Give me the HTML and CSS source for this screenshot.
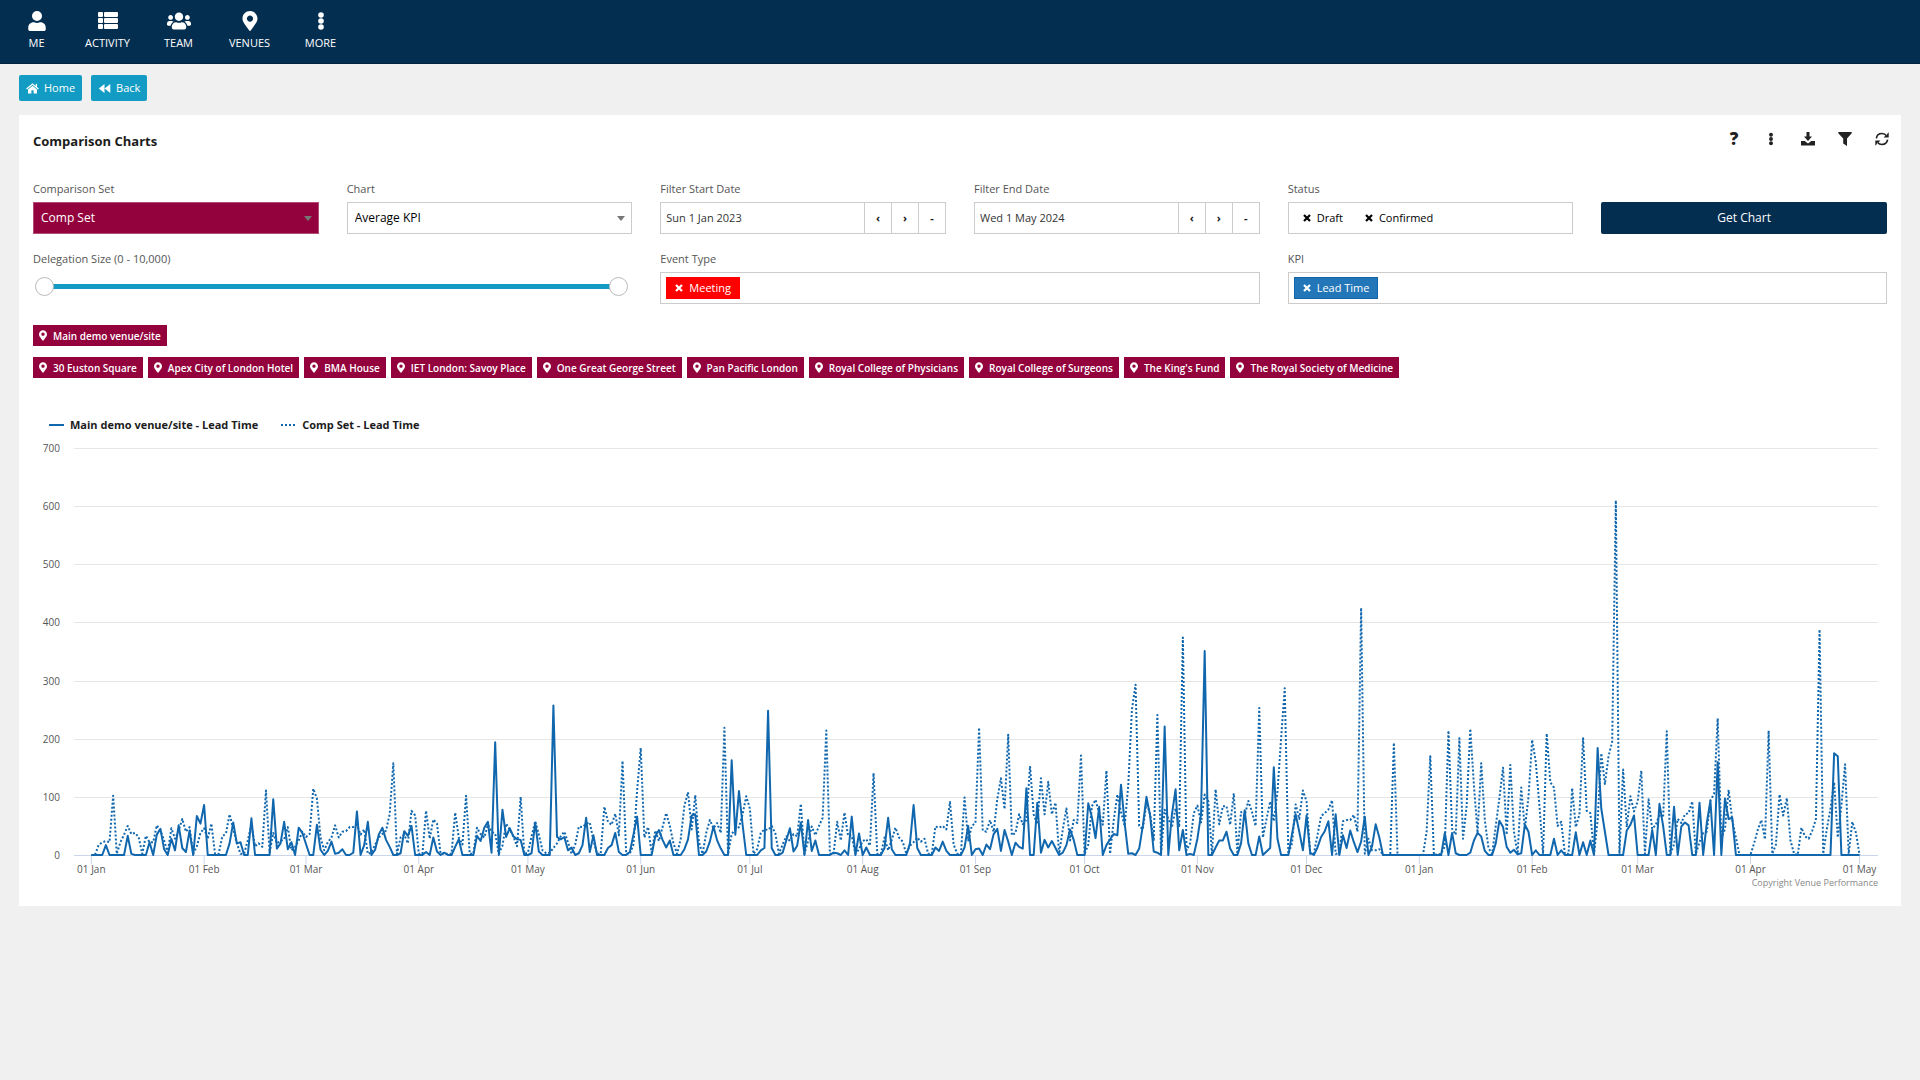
FILE: index.html
```html
<!DOCTYPE html>
<html lang="en">
<head>
  <meta charset="UTF-8">
  <meta name="viewport" content="width=device-width, initial-scale=1.0">
  <title>Comparison Charts</title>
  <link rel="stylesheet" href="styles.css">
</head>
<body>
  <!-- shared icons -->
  <svg class="sprite" aria-hidden="true">
    <symbol id="pin" viewBox="0 0 384 512"><path d="M172.268 501.67C26.97 291.031 0 269.413 0 192 0 85.961 85.961 0 192 0s192 85.961 192 192c0 77.413-26.97 99.031-172.268 309.67-9.535 13.774-29.93 13.773-39.464 0zM192 272c44.183 0 80-35.817 80-80s-35.817-80-80-80-80 35.817-80 80 35.817 80 80 80z"/></symbol>
    <symbol id="dots" viewBox="0 -1 6 20"><circle cx="3" cy="3" r="2.8"/><circle cx="3" cy="9" r="2.8"/><circle cx="3" cy="15" r="2.8"/></symbol>
    <symbol id="cross" viewBox="0 0 8 8"><path d="M1 1l6 6M7 1l-6 6" stroke="currentColor" stroke-width="2.2"/></symbol>
  </svg>

  <nav class="navbar">
    <a href="#" class="nav-item">
      <svg class="nav-icon" viewBox="0 0 448 512"><path d="M224 256A128 128 0 1 0 224 0a128 128 0 0 0 0 256zm89.600 32h-16.700c-22.200 10.200-46.900 16-72.900 16s-50.600-5.800-72.900-16h-16.700C60.200 288 0 348.200 0 422.400V464c0 26.500 21.500 48 48 48h352c26.500 0 48-21.500 48-48v-41.600c0-74.200-60.200-134.400-134.400-134.400z"/></svg>
      <span>ME</span>
    </a>
    <a href="#" class="nav-item">
      <svg class="nav-icon" viewBox="0 -1 20 20"><rect x="0" y="0" width="5" height="5" rx="1"/><rect x="0" y="6" width="5" height="5" rx="1"/><rect x="0" y="12" width="5" height="5" rx="1"/><rect x="6" y="0" width="14" height="5" rx="1"/><rect x="6" y="6" width="14" height="5" rx="1"/><rect x="6" y="12" width="14" height="5" rx="1"/></svg>
      <span>ACTIVITY</span>
    </a>
    <a href="#" class="nav-item">
      <svg class="nav-icon" viewBox="0 0 640 512"><path d="M96 224c35.300 0 64-28.700 64-64s-28.700-64-64-64-64 28.700-64 64 28.700 64 64 64zm448 0c35.300 0 64-28.700 64-64s-28.700-64-64-64-64 28.700-64 64 28.700 64 64 64zm32 32h-64c-17.600 0-33.500 7.100-45.100 18.600 40.300 22.100 68.900 62 75.100 109.400h66c17.700 0 32-14.300 32-32v-32c0-35.300-28.700-64-64-64zm-256 0c61.900 0 112-50.100 112-112S381.900 32 320 32 208 82.100 208 144s50.100 112 112 112zm76.800 32h-8.300c-20.800 10-43.900 16-68.500 16s-47.600-6-68.500-16h-8.300C179.600 288 128 339.600 128 403.200V432c0 26.500 21.500 48 48 48h288c26.500 0 48-21.500 48-48v-28.800c0-63.600-51.600-115.200-115.200-115.200zm-223.700-13.400C161.500 263.100 145.600 256 128 256H64c-35.300 0-64 28.700-64 64v32c0 17.700 14.300 32 32 32h65.900c6.300-47.400 34.900-87.300 75.200-109.400z"/></svg>
      <span>TEAM</span>
    </a>
    <a href="#" class="nav-item">
      <svg class="nav-icon"><use href="#pin"/></svg>
      <span>VENUES</span>
    </a>
    <a href="#" class="nav-item">
      <svg class="nav-icon"><use href="#dots"/></svg>
      <span>MORE</span>
    </a>
  </nav>

  <main class="page">
    <div class="toolbar">
      <a href="#" class="btn-small">
        <svg viewBox="0 0 13 11"><path d="M6.500 2.700L2 6.400V10.400h3.400V7.300h2.200v3.100H11V6.400z"/><path d="M.6 6L6.500 1.100 12.400 6M10.400.8v3" fill="none" stroke="currentColor" stroke-width="1.300"/></svg>
        Home
      </a>
      <a href="#" class="btn-small">
        <svg viewBox="0 0 13 11"><path d="M6.500 1v9L.8 5.500zM12.300 1v9L6.600 5.500z"/></svg>
        Back
      </a>
    </div>

    <section class="card">
      <header class="card-header">
        <h1>Comparison Charts</h1>
        <div class="card-tools">
          <button type="button" class="tool help" aria-label="Help">?</button>
          <button type="button" class="tool" aria-label="More"><svg><use href="#dots"/></svg></button>
          <button type="button" class="tool" aria-label="Download"><svg viewBox="0 0 14 14"><path d="M5.500 0h3v4.500H11L7 9 3 4.500h2.500z"/><path d="M0 9h3.700L7 11.600 10.300 9H14v4.500H0z"/></svg></button>
          <button type="button" class="tool" aria-label="Filter"><svg viewBox="0 0 14 14"><path d="M.3 0h13.400v1.200L9 6.500V14L5.200 11.500v-5L.3 1.200z"/></svg></button>
          <button type="button" class="tool" aria-label="Refresh"><svg viewBox="0 0 14 14"><path d="M1.400 6.300C1.800 3.500 4.200 1.500 7 1.500c1.900 0 3.500.9 4.600 2.300M12.600 7.700c-.4 2.800-2.800 4.800-5.600 4.800-1.900 0-3.500-.9-4.600-2.300" fill="none" stroke="currentColor" stroke-width="1.600"/><path d="M13.700.3v5.100H8.600l1.700-1.700 1.400 0 .6-2zM.3 13.700V8.600h5.100l-1.700 1.700-1.400 0-.6 2z"/></svg></button>
        </div>
      </header>

      <form class="filters">
        <div class="field">
          <label for="comp-set">Comparison Set</label>
          <div class="select select-dark">
            <select id="comp-set"><option>Comp Set</option></select>
          </div>
        </div>
        <div class="field">
          <label for="chart-type">Chart</label>
          <div class="select">
            <select id="chart-type"><option>Average KPI</option></select>
          </div>
        </div>
        <div class="field">
          <label for="start-date">Filter Start Date</label>
          <div class="control">
            <input type="text" id="start-date" value="Sun 1 Jan 2023">
            <button type="button" aria-label="Previous day">‹</button>
            <button type="button" aria-label="Next day">›</button>
            <button type="button" aria-label="Clear date">-</button>
          </div>
        </div>
        <div class="field">
          <label for="end-date">Filter End Date</label>
          <div class="control">
            <input type="text" id="end-date" value="Wed 1 May 2024">
            <button type="button" aria-label="Previous day">‹</button>
            <button type="button" aria-label="Next day">›</button>
            <button type="button" aria-label="Clear date">-</button>
          </div>
        </div>
        <div class="field">
          <label for="status">Status</label>
          <div class="control chips">
            <button type="button" class="chip"><svg><use href="#cross"/></svg>Draft</button>
            <button type="button" class="chip"><svg><use href="#cross"/></svg>Confirmed</button>
            <input type="text" id="status">
          </div>
        </div>
        <button type="button" class="btn-primary">Get Chart</button>

        <div class="field wide">
          <label for="size-min">Delegation Size (0 - 10,000)</label>
          <div class="slider">
            <input type="range" id="size-min" min="0" max="10000" value="0">
            <input type="range" id="size-max" min="0" max="10000" value="10000" aria-label="Maximum delegation size">
          </div>
        </div>
        <div class="field wide">
          <label for="event-type">Event Type</label>
          <div class="control chips">
            <button type="button" class="chip chip-red"><svg><use href="#cross"/></svg>Meeting</button>
            <input type="text" id="event-type">
          </div>
        </div>
        <div class="field wide">
          <label for="kpi">KPI</label>
          <div class="control chips">
            <button type="button" class="chip chip-blue"><svg><use href="#cross"/></svg>Lead Time</button>
            <input type="text" id="kpi">
          </div>
        </div>
      </form>

      <ul class="tags">
        <li><svg><use href="#pin"/></svg>Main demo venue/site</li>
      </ul>
      <ul class="tags">
        <li><svg><use href="#pin"/></svg>30 Euston Square</li>
        <li><svg><use href="#pin"/></svg>Apex City of London Hotel</li>
        <li><svg><use href="#pin"/></svg>BMA House</li>
        <li><svg><use href="#pin"/></svg>IET London: Savoy Place</li>
        <li><svg><use href="#pin"/></svg>One Great George Street</li>
        <li><svg><use href="#pin"/></svg>Pan Pacific London</li>
        <li><svg><use href="#pin"/></svg>Royal College of Physicians</li>
        <li><svg><use href="#pin"/></svg>Royal College of Surgeons</li>
        <li><svg><use href="#pin"/></svg>The King's Fund</li>
        <li><svg><use href="#pin"/></svg>The Royal Society of Medicine</li>
      </ul>

      <div class="chart">
        <div class="legend">
          <span><svg><line class="series" x1="0" y1="4" x2="15" y2="4"/></svg>Main demo venue/site - Lead Time</span>
          <span><svg><line class="series dotted" x1="0" y1="4" x2="15" y2="4"/></svg>Comp Set - Lead Time</span>
        </div>

        <svg class="plot" role="img" aria-label="Lead time by day, January 2023 to May 2024">
          <g class="grid">
            <line x1="0" x2="100%" y1="0" y2="0"/>
            <line x1="0" x2="100%" y1="58" y2="58"/>
            <line x1="0" x2="100%" y1="116" y2="116"/>
            <line x1="0" x2="100%" y1="174" y2="174"/>
            <line x1="0" x2="100%" y1="233" y2="233"/>
            <line x1="0" x2="100%" y1="291" y2="291"/>
            <line x1="0" x2="100%" y1="349" y2="349"/>
            <line class="axis" x1="0" x2="100%" y1="407" y2="407"/>
          </g>
          <g class="y-labels">
            <text x="-14" y="4">700</text>
            <text x="-14" y="62">600</text>
            <text x="-14" y="120">500</text>
            <text x="-14" y="178">400</text>
            <text x="-14" y="237">300</text>
            <text x="-14" y="295">200</text>
            <text x="-14" y="353">100</text>
            <text x="-14" y="411">0</text>
          </g>

          <!-- month ticks, placed by day number out of 486 -->
          <svg class="x-axis" x="0.96%" width="98.02%">
            <line x1="0" x2="0" y1="407" y2="416"/><text x="0" y="425">01 Jan</text>
            <line x1="6.38%" x2="6.38%" y1="407" y2="416"/><text x="6.38%" y="425">01 Feb</text>
            <line x1="12.14%" x2="12.14%" y1="407" y2="416"/><text x="12.14%" y="425">01 Mar</text>
            <line x1="18.52%" x2="18.52%" y1="407" y2="416"/><text x="18.52%" y="425">01 Apr</text>
            <line x1="24.69%" x2="24.69%" y1="407" y2="416"/><text x="24.69%" y="425">01 May</text>
            <line x1="31.07%" x2="31.07%" y1="407" y2="416"/><text x="31.07%" y="425">01 Jun</text>
            <line x1="37.24%" x2="37.24%" y1="407" y2="416"/><text x="37.24%" y="425">01 Jul</text>
            <line x1="43.62%" x2="43.62%" y1="407" y2="416"/><text x="43.62%" y="425">01 Aug</text>
            <line x1="50%" x2="50%" y1="407" y2="416"/><text x="50%" y="425">01 Sep</text>
            <line x1="56.17%" x2="56.17%" y1="407" y2="416"/><text x="56.17%" y="425">01 Oct</text>
            <line x1="62.55%" x2="62.55%" y1="407" y2="416"/><text x="62.55%" y="425">01 Nov</text>
            <line x1="68.72%" x2="68.72%" y1="407" y2="416"/><text x="68.72%" y="425">01 Dec</text>
            <line x1="75.10%" x2="75.10%" y1="407" y2="416"/><text x="75.10%" y="425">01 Jan</text>
            <line x1="81.48%" x2="81.48%" y1="407" y2="416"/><text x="81.48%" y="425">01 Feb</text>
            <line x1="87.45%" x2="87.45%" y1="407" y2="416"/><text x="87.45%" y="425">01 Mar</text>
            <line x1="93.83%" x2="93.83%" y1="407" y2="416"/><text x="93.83%" y="425">01 Apr</text>
            <line x1="100%" x2="100%" y1="407" y2="416"/><text x="100%" y="425">01 May</text>
          </svg>

          <!-- points are day,value -->
          <svg class="lines" x="0.96%" width="98.02%" height="407" viewBox="0 -700 486 700" preserveAspectRatio="none">
            <g transform="scale(1,-1)">
              <polyline class="series dotted" points="0,0 1,0 2,17 3,22 4,24 5,22 6,102 7,2 8,22 9,35 10,50 11,36 12,38 13,31 14,2 15,33 16,22 17,22 18,51 19,42 20,25 21,4 22,46 23,28 24,42 25,62 26,40 27,48 28,2 29,15 30,38 31,46 32,28 33,54 34,2 35,2 36,32 37,37 38,70 39,45 40,20 41,2 42,2 43,25 44,52 45,15 46,20 47,14 48,111 49,4 50,38 51,20 52,24 53,27 54,48 55,8 56,14 57,25 58,40 59,31 60,36 61,114 62,97 63,30 64,8 65,22 66,30 67,51 68,30 69,40 70,41 71,48 72,48 73,52 74,35 75,44 76,2 77,4 78,18 79,30 80,36 81,42 82,70 83,158 84,2 85,30 86,35 87,20 88,76 89,68 90,2 91,2 92,76 93,28 94,61 95,54 96,2 99,2 100,73 101,30 102,18 103,102 104,2 105,2 106,47 107,36 108,30 109,52 110,40 111,37 112,2 113,16 114,54 115,44 116,32 117,15 118,100 119,2 120,4 121,32 122,58 123,35 124,8 125,3 126,4 127,12 128,20 129,32 130,40 131,22 132,2 133,18 134,49 135,48 136,54 137,56 138,25 139,2 140,2 141,83 142,57 143,52 144,71 145,34 146,162 147,2 148,2 149,18 150,110 151,184 152,30 153,48 154,4 155,42 156,24 157,48 158,72 159,50 160,20 161,2 162,28 163,85 164,108 165,44 166,103 167,22 168,2 169,38 170,60 171,46 172,55 173,38 174,219 175,2 176,36 177,44 178,48 179,70 180,101 181,80 182,2 183,10 184,38 185,44 186,43 187,50 188,37 189,2 190,18 191,32 192,24 193,36 194,32 195,88 196,2 197,24 198,49 199,34 200,50 201,64 202,214 203,2 204,2 205,57 206,25 207,73 208,33 209,33 210,2 211,10 212,24 213,27 214,16 215,141 216,2 217,2 218,30 219,8 220,26 221,47 222,30 223,23 224,2 225,16 226,22 227,30 228,23 229,28 230,2 231,2 232,49 233,47 234,50 235,44 236,91 237,18 238,2 239,2 240,99 241,25 242,50 243,55 244,219 245,42 246,40 247,60 248,40 249,96 250,132 251,79 252,207 253,34 254,38 255,70 256,53 257,60 258,153 259,70 260,53 261,132 262,70 263,126 264,70 265,90 266,2 267,44 268,80 269,25 270,60 271,55 272,171 273,2 274,18 275,84 276,95 277,72 278,52 279,145 280,2 281,60 282,104 283,74 284,50 285,120 286,250 287,293 288,50 289,44 290,90 291,70 292,26 293,241 294,2 295,78 296,62 297,48 298,80 299,50 300,374 301,8 302,20 303,72 304,85 305,56 306,104 307,92 308,2 309,113 310,53 311,84 312,84 313,52 314,106 315,2 316,74 317,68 318,93 319,74 320,50 321,253 322,30 323,62 324,92 325,58 326,108 327,200 328,287 329,2 330,20 331,87 332,62 333,111 334,92 335,2 336,2 337,34 338,67 339,72 340,78 341,94 342,2 343,2 344,58 345,60 346,60 347,69 348,40 349,425 350,2 351,28 352,8 353,8 354,10 355,0 357,0 358,193 359,0 366,0 367,40 368,170 369,0 371,2 372,15 373,214 374,45 375,35 376,201 377,28 378,85 379,217 380,120 381,38 382,158 383,60 384,12 385,2 386,50 387,98 388,150 389,35 390,155 391,40 392,2 393,116 394,45 395,100 396,198 397,160 398,85 399,2 400,209 401,125 402,116 403,50 404,57 405,2 406,2 407,115 408,48 409,70 410,201 411,76 412,72 413,2 414,60 415,175 416,122 417,170 418,195 419,610 420,2 421,147 422,48 423,101 424,75 425,92 426,145 427,2 428,96 429,45 430,52 431,70 432,65 433,213 434,2 435,18 436,62 437,55 438,70 439,72 440,92 441,2 442,22 443,38 444,40 445,94 446,105 447,235 448,28 449,45 450,112 451,60 452,30 453,0 456,0 457,20 458,43 459,60 460,27 461,214 462,2 463,18 464,104 465,68 466,98 467,25 468,2 469,0 470,47 471,32 472,28 473,42 474,62 475,388 476,2 477,45 478,80 479,125 480,30 481,85 482,156 483,2 484,57 485,38 486,0"/>
              <polyline class="series" points="0,0 3,0 4,17 5,0 9,0 10,33 11,2 12,0 15,0 16,22 17,0 18,35 19,45 20,10 21,0 22,28 23,8 24,51 25,12 26,5 27,42 28,0 29,67 30,54 31,86 32,0 37,0 38,20 39,56 40,20 41,22 42,0 43,0 44,63 45,0 49,0 50,96 51,11 52,20 53,57 54,10 55,22 56,0 57,47 58,38 59,19 60,0 61,0 62,52 63,9 64,0 65,7 66,23 67,2 68,4 69,10 70,0 71,0 72,4 73,75 74,0 75,17 76,57 77,0 78,9 79,35 80,47 81,26 82,14 83,0 84,0 85,3 86,41 87,33 88,50 89,0 91,0 92,5 93,0 94,30 95,6 96,0 97,4 98,0 99,0 100,14 101,27 102,0 105,0 106,33 107,24 108,47 109,57 110,4 111,194 112,0 113,78 114,31 115,46 116,32 117,27 118,26 119,0 120,0 121,3 122,56 123,6 124,0 126,0 127,257 128,31 129,27 130,31 131,8 132,13 133,0 134,3 135,17 136,64 137,5 138,34 139,0 141,0 142,12 143,17 144,38 145,5 146,0 147,0 148,5 149,35 150,66 151,0 154,0 155,32 156,43 157,26 158,13 159,25 160,0 162,0 163,10 164,27 165,68 166,70 167,0 168,0 169,6 170,23 171,49 172,25 173,11 174,0 175,0 176,163 177,35 178,110 179,52 180,0 183,0 184,8 185,12 186,248 187,12 188,0 189,0 190,4 191,25 192,46 193,6 194,16 195,56 196,0 197,60 198,7 199,25 200,0 203,0 204,4 205,3 206,0 207,8 208,0 209,66 210,0 211,37 212,0 213,13 214,0 217,0 218,12 219,64 220,10 221,0 224,0 225,20 226,86 227,12 228,0 231,0 232,13 233,7 234,23 235,7 236,0 239,0 240,13 241,50 242,0 243,10 244,11 245,0 246,18 247,10 248,36 249,45 250,7 251,43 252,23 253,0 254,21 255,14 256,11 257,115 258,0 259,0 260,90 261,4 262,26 263,13 264,24 265,12 266,0 267,4 268,17 269,44 270,26 271,0 273,0 274,89 275,65 276,29 277,83 278,0 279,17 280,27 281,36 282,34 283,121 284,55 285,2 286,3 287,0 288,11 289,50 290,100 291,68 292,6 293,4 294,0 295,221 296,0 297,70 298,113 299,8 300,43 301,0 302,2 303,0 304,28 305,70 306,351 307,0 308,0 309,13 310,25 311,25 312,40 313,11 314,0 315,0 316,20 317,77 318,20 319,0 320,0 321,32 322,0 323,6 324,12 325,151 326,28 327,0 329,0 330,36 331,70 332,40 333,8 334,68 335,4 336,0 337,13 338,31 339,41 340,58 341,0 342,70 343,0 344,34 345,12 346,42 347,22 348,5 349,23 350,66 351,0 352,15 353,53 354,30 355,0 371,0 372,38 373,0 374,38 375,3 376,0 378,0 379,4 380,25 381,38 382,32 383,7 384,0 385,0 386,20 387,59 388,48 389,14 390,4 391,9 392,1 393,3 394,52 395,40 396,0 397,8 398,0 401,0 402,28 403,0 404,8 405,0 407,0 408,39 409,0 410,22 411,0 412,25 413,0 414,184 415,80 416,40 417,0 421,0 422,42 423,52 424,68 425,0 428,0 429,43 430,0 431,88 432,50 433,0 434,0 435,83 436,0 437,49 438,56 439,51 440,0 441,0 442,90 443,0 444,55 445,93 446,0 447,160 448,0 449,97 450,62 451,64 452,0 478,0 479,175 480,170 481,0 486,0"/>
            </g>
          </svg>
        </svg>
        <p class="credits">Copyright Venue Performance</p>
      </div>
    </section>
  </main>
</body>
</html>
```
FILE: styles.css
```css
* {
  box-sizing: border-box;
}
body {
  margin: 0;
  background-color: #f0f0f0;
  font-family: "Open Sans", "Noto Sans", sans-serif;
  font-size: 11px;
  line-height: 16px;
  color: #1c1c1c;
}
svg {
  fill: currentColor;
}
button, input, select {
  font: inherit;
  color: inherit;
  margin: 0;
  padding: 0;
  border: 0;
  border-radius: 0;
  background: none;
}
button {
  cursor: pointer;
}
a {
  text-decoration: none;
}
.sprite {
  display: none;
}

/* top navigation */
.navbar {
  display: flex;
  height: 64px;
  padding-left: 1px;
  background-color: #042e50;
  border-bottom: 1px solid #02213c;
}
.nav-item {
  display: flex;
  flex-direction: column;
  align-items: center;
  gap: 4px;
  width: 71px;
  padding-top: 11px;
  color: white;
}
.nav-icon {
  width: 24px;
  height: 20px;
}

/* home / back buttons */
.page {
  padding: 0 19px 24px;
}
.toolbar {
  display: flex;
  gap: 9px;
  padding: 11px 0 14px;
}
.btn-small {
  display: flex;
  align-items: center;
  gap: 5px;
  height: 26px;
  padding: 0 7px;
  border-radius: 2px;
  background-color: #129bc3;
  color: white;
  font-weight: 500;
}
.btn-small svg {
  width: 13px;
  height: 11px;
}

.card {
  padding: 14px 14px 16px;
  background-color: white;
}
.card-header {
  display: flex;
  justify-content: space-between;
  height: 24px;
  margin-bottom: 28px;
}
.card-header h1 {
  margin: 0;
  font-size: 13px;
  line-height: 24px;
  font-weight: 700;
}
.card-tools {
  display: flex;
  gap: 13px;
  margin-right: -7px;
}
.tool {
  display: flex;
  align-items: center;
  justify-content: center;
  width: 24px;
  height: 20px;
  color: #222;
}
.tool svg {
  width: 14px;
  height: 14px;
}
.help {
  font-size: 17px;
  font-weight: 800;
}

/* filter form */
.filters {
  display: grid;
  grid-template-columns: repeat(6, 1fr);
  gap: 17px 28px;
  align-items: end;
  margin-bottom: 21px;
}
.field {
  display: flex;
  flex-direction: column;
  gap: 5px;
  min-width: 0;
}
.field label {
  color: #555;
}
.wide {
  grid-column: span 2;
}
.select {
  display: grid;
  align-items: center;
  height: 32px;
  border: 1px solid #ccc;
}
.select select {
  grid-area: 1 / 1;
  width: 100%;
  height: 30px;
  padding: 0 7px;
  appearance: none;
  font-size: 12px;
  color: black;
}
.select::after {
  content: "";
  grid-area: 1 / 1;
  justify-self: end;
  margin-right: 6px;
  border: 4px solid transparent;
  border-top: 5px solid #777;
  border-bottom: 0;
  pointer-events: none;
}
.select-dark {
  background-color: #93023d;
  border-color: #b04c75;
}
.select-dark select {
  color: white;
}
.control {
  display: flex;
  height: 32px;
  border: 1px solid #ccc;
}
.control input {
  flex: 1;
  min-width: 0;
  padding: 0 5px;
  color: #333;
}
.control > button:not(.chip) {
  width: 27px;
  border-left: 1px solid #ccc;
  font-weight: 700;
}
.chips {
  align-items: center;
  gap: 4px;
  padding: 0 5px;
}
.chip {
  display: flex;
  align-items: center;
  gap: 6px;
  height: 22px;
  padding: 0 9px;
  color: black;
}
.chip svg {
  width: 8px;
  height: 8px;
}
.chip-red {
  background-color: #ff0000;
  color: white;
}
.chip-blue {
  background-color: #2376b7;
  border: 1px solid #1065ab;
  padding: 0 8px;
  color: white;
}
.btn-primary {
  height: 32px;
  border-radius: 2px;
  background-color: #042e50;
  color: white;
  font-size: 12px;
  font-weight: 500;
}

/* two range inputs on one track */
.slider {
  display: grid;
  height: 32px;
  padding: 0 4px 4px 2px;
}
.slider input {
  grid-area: 1 / 1;
  width: 100%;
  appearance: none;
  pointer-events: none;
}
.slider input:first-child {
  background: linear-gradient(#129bc3, #129bc3) center / calc(100% - 10px) 5px no-repeat;
}
.slider input::-webkit-slider-thumb {
  appearance: none;
  width: 19px;
  height: 19px;
  border: 1px solid #bbb;
  border-radius: 50%;
  background-color: white;
  pointer-events: auto;
}

/* venue tags */
.tags {
  display: flex;
  flex-wrap: wrap;
  gap: 5px;
  margin: 0 0 11px;
  padding: 0;
  list-style: none;
}
.tags li {
  display: flex;
  align-items: center;
  gap: 6px;
  height: 21px;
  padding: 0 6px;
  background-color: #93023d;
  color: white;
  font-size: 10px;
  font-weight: 600;
}
.tags svg {
  width: 8px;
  height: 11px;
}

/* chart */
.chart {
  margin-top: 39px;
  padding: 0 9px 0 41px;
}
.legend {
  display: flex;
  gap: 23px;
  margin: 0 0 15px -25px;
  font-weight: 700;
}
.legend span {
  display: flex;
  align-items: center;
  gap: 5px;
}
.legend svg {
  width: 16px;
  height: 8px;
}
.plot {
  display: block;
  width: 100%;
  height: 407px;
  overflow: visible;
  font-size: 10px;
}
.plot text {
  fill: #555;
}
.grid line {
  stroke: #e6e6e6;
  shape-rendering: crispEdges;
}
.grid .axis, .x-axis line {
  stroke: #ccd6eb;
}
.y-labels text {
  text-anchor: end;
}
.x-axis, .lines {
  overflow: visible;
}
.x-axis text {
  text-anchor: middle;
}
.series {
  fill: none;
  stroke: #1167ad;
  stroke-width: 2px;
  stroke-linejoin: round;
  vector-effect: non-scaling-stroke;
}
.dotted {
  stroke-dasharray: 2 2;
}
.credits {
  margin: 21px 0 0;
  text-align: right;
  font-size: 9px;
  line-height: 14px;
  color: #888;
}
```
